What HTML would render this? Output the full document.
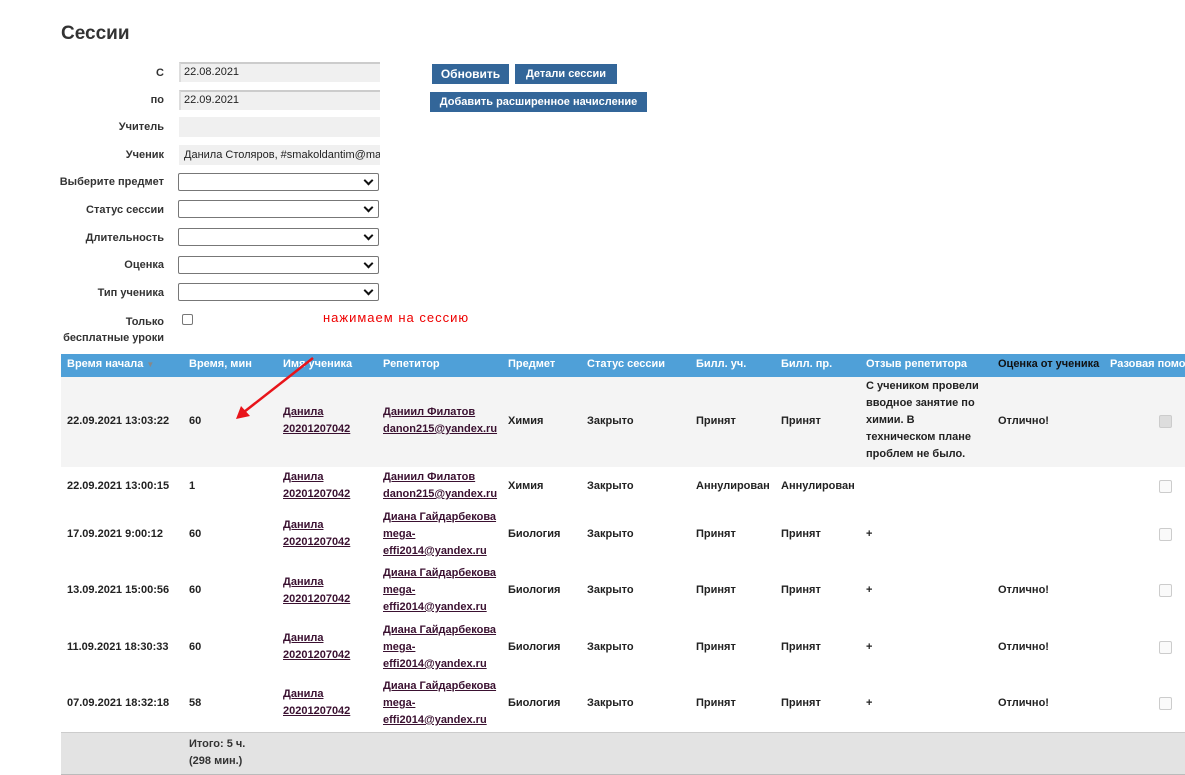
<!DOCTYPE html>
<html><head><meta charset="utf-8"><style>
body{margin:0;width:1185px;height:774px;overflow:hidden;background:#fff;font-family:"Liberation Sans",Arial,sans-serif;position:relative;color:#222}
.a{position:absolute;white-space:nowrap}
.l{position:absolute;font-size:11px;font-weight:bold;color:#333;text-align:right;width:120px;left:44px;line-height:14px}
.in{position:absolute;left:179px;width:201px;height:20px;background:#f0f0f0;border-top:2px solid #ccc;border-left:2px solid #ddd;box-sizing:border-box;font-size:11px;line-height:17px;padding-left:3px;color:#222;overflow:hidden;white-space:nowrap}
.sel{position:absolute;left:178px;width:201px;height:18px;border:1px solid #777;border-radius:2px;box-sizing:border-box;background:#fff}
.sel:after{content:"";position:absolute;right:6px;top:3px;width:5px;height:5px;border-right:2px solid #111;border-bottom:2px solid #111;transform:rotate(45deg)}
.btn{position:absolute;background:#336699;color:#fff;font-size:11px;font-weight:bold;text-align:center;line-height:20px;height:20px}
.t{position:absolute;font-size:11px;font-weight:bold;line-height:17px;color:#222;white-space:nowrap}
.u{text-decoration:underline;color:#3a1030}
.h{position:absolute;font-size:11px;font-weight:bold;color:#fff;top:358px;white-space:nowrap}
.cb{position:absolute;left:1159px;width:11px;height:11px;border:1px solid #ccc;border-radius:2px;background:#fafafa}
</style></head><body>
<div class="a" style="left:61px;top:23px;font-size:19px;font-weight:bold;color:#333">Сессии</div>

<div class="l" style="top:66px">С</div><div class="in" style="top:62px">22.08.2021</div>
<div class="l" style="top:93px">по</div><div class="in" style="top:90px">22.09.2021</div>
<div class="l" style="top:120px">Учитель</div><div class="in" style="top:117px;border:none"></div>
<div class="l" style="top:148px">Ученик</div><div class="in" style="top:145px;border:none;padding-left:5px;line-height:21px">Данила Столяров, #smakoldantim@mail.ru</div>
<div class="l" style="top:175px">Выберите предмет</div><div class="sel" style="top:173px"></div>
<div class="l" style="top:203px">Статус сессии</div><div class="sel" style="top:200px"></div>
<div class="l" style="top:231px">Длительность</div><div class="sel" style="top:228px"></div>
<div class="l" style="top:258px">Оценка</div><div class="sel" style="top:256px"></div>
<div class="l" style="top:286px">Тип ученика</div><div class="sel" style="top:283px"></div>
<div class="l" style="top:314px;line-height:16px">Только<br>бесплатные уроки</div>
<div class="a" style="left:182px;top:314px;width:9px;height:9px;border:1px solid #777;border-radius:2px"></div>
<div class="a" style="left:323px;top:310px;font-size:13px;color:#e00;letter-spacing:1px">нажимаем на сессию</div>

<div class="btn" style="left:432px;top:64px;width:77px;font-size:12px">Обновить</div>
<div class="btn" style="left:515px;top:64px;width:102px">Детали сессии</div>
<div class="btn" style="left:430px;top:92px;width:217px">Добавить расширенное начисление</div>

<div class="a" style="left:61px;top:354px;width:1124px;height:23px;background:#4fa0d8"></div>
<div class="a" style="left:61px;top:377px;width:1124px;height:90px;background:#f4f4f4"></div>
<div class="a" style="left:61px;top:732px;width:1124px;height:41px;background:#e3e3e3;border-top:1px solid #ccc;border-bottom:1px solid #bbb"></div>

<div class="h" style="left:67px">Время начала <span style="color:#888;font-size:8px">▼</span></div>
<div class="h" style="left:189px">Время, мин</div>
<div class="h" style="left:283px">Имя ученика</div>
<div class="h" style="left:383px">Репетитор</div>
<div class="h" style="left:508px">Предмет</div>
<div class="h" style="left:587px">Статус сессии</div>
<div class="h" style="left:696px">Билл. уч.</div>
<div class="h" style="left:781px">Билл. пр.</div>
<div class="h" style="left:866px">Отзыв репетитора</div>
<div class="h" style="left:998px;color:#111">Оценка от ученика</div>
<div class="h" style="left:1110px">Разовая помощь</div>

<!-- row1 -->
<div class="t" style="left:67px;top:413px">22.09.2021 13:03:22</div>
<div class="t" style="left:189px;top:413px">60</div>
<div class="t u" style="left:283px;top:404px">Данила<br>20201207042</div>
<div class="t u" style="left:383px;top:404px">Даниил Филатов<br>danon215@yandex.ru</div>
<div class="t" style="left:508px;top:413px">Химия</div>
<div class="t" style="left:587px;top:413px">Закрыто</div>
<div class="t" style="left:696px;top:413px">Принят</div>
<div class="t" style="left:781px;top:413px">Принят</div>
<div class="t" style="left:866px;top:378px">С учеником провели<br>вводное занятие по<br>химии. В<br>техническом плане<br>проблем не было.</div>
<div class="t" style="left:998px;top:413px">Отлично!</div>
<div class="cb" style="top:415px;background:#ddd;border-color:#ccc"></div>
<!-- row2 -->
<div class="t" style="left:67px;top:478px">22.09.2021 13:00:15</div>
<div class="t" style="left:189px;top:478px">1</div>
<div class="t u" style="left:283px;top:469px">Данила<br>20201207042</div>
<div class="t u" style="left:383px;top:469px">Даниил Филатов<br>danon215@yandex.ru</div>
<div class="t" style="left:508px;top:478px">Химия</div>
<div class="t" style="left:587px;top:478px">Закрыто</div>
<div class="t" style="left:696px;top:478px">Аннулирован</div>
<div class="t" style="left:781px;top:478px">Аннулирован</div>
<div class="cb" style="top:480px"></div>
<!-- rows 3-6 -->
<div class="t" style="left:67px;top:526px">17.09.2021 9:00:12</div>
<div class="t" style="left:189px;top:526px">60</div>
<div class="t u" style="left:283px;top:517px">Данила<br>20201207042</div>
<div class="t u" style="left:383px;top:509px">Диана Гайдарбекова<br>mega-<br>effi2014@yandex.ru</div>
<div class="t" style="left:508px;top:526px">Биология</div>
<div class="t" style="left:587px;top:526px">Закрыто</div>
<div class="t" style="left:696px;top:526px">Принят</div>
<div class="t" style="left:781px;top:526px">Принят</div>
<div class="t" style="left:866px;top:526px">+</div>
<div class="cb" style="top:528px"></div>

<div class="t" style="left:67px;top:582px">13.09.2021 15:00:56</div>
<div class="t" style="left:189px;top:582px">60</div>
<div class="t u" style="left:283px;top:574px">Данила<br>20201207042</div>
<div class="t u" style="left:383px;top:565px">Диана Гайдарбекова<br>mega-<br>effi2014@yandex.ru</div>
<div class="t" style="left:508px;top:582px">Биология</div>
<div class="t" style="left:587px;top:582px">Закрыто</div>
<div class="t" style="left:696px;top:582px">Принят</div>
<div class="t" style="left:781px;top:582px">Принят</div>
<div class="t" style="left:866px;top:582px">+</div>
<div class="t" style="left:998px;top:582px">Отлично!</div>
<div class="cb" style="top:584px"></div>

<div class="t" style="left:67px;top:639px">11.09.2021 18:30:33</div>
<div class="t" style="left:189px;top:639px">60</div>
<div class="t u" style="left:283px;top:630px">Данила<br>20201207042</div>
<div class="t u" style="left:383px;top:622px">Диана Гайдарбекова<br>mega-<br>effi2014@yandex.ru</div>
<div class="t" style="left:508px;top:639px">Биология</div>
<div class="t" style="left:587px;top:639px">Закрыто</div>
<div class="t" style="left:696px;top:639px">Принят</div>
<div class="t" style="left:781px;top:639px">Принят</div>
<div class="t" style="left:866px;top:639px">+</div>
<div class="t" style="left:998px;top:639px">Отлично!</div>
<div class="cb" style="top:641px"></div>

<div class="t" style="left:67px;top:695px">07.09.2021 18:32:18</div>
<div class="t" style="left:189px;top:695px">58</div>
<div class="t u" style="left:283px;top:686px">Данила<br>20201207042</div>
<div class="t u" style="left:383px;top:678px">Диана Гайдарбекова<br>mega-<br>effi2014@yandex.ru</div>
<div class="t" style="left:508px;top:695px">Биология</div>
<div class="t" style="left:587px;top:695px">Закрыто</div>
<div class="t" style="left:696px;top:695px">Принят</div>
<div class="t" style="left:781px;top:695px">Принят</div>
<div class="t" style="left:866px;top:695px">+</div>
<div class="t" style="left:998px;top:695px">Отлично!</div>
<div class="cb" style="top:697px"></div>

<div class="t" style="left:189px;top:736px;color:#333">Итого: 5 ч.<br>(298 мин.)</div>

<svg class="a" style="left:0;top:0" width="1185" height="774">
<line x1="313" y1="358" x2="244" y2="412" stroke="#e8141a" stroke-width="2.5"/>
<polygon points="236,419 241,406 250,416" fill="#e8141a"/>
</svg>
</body></html>
